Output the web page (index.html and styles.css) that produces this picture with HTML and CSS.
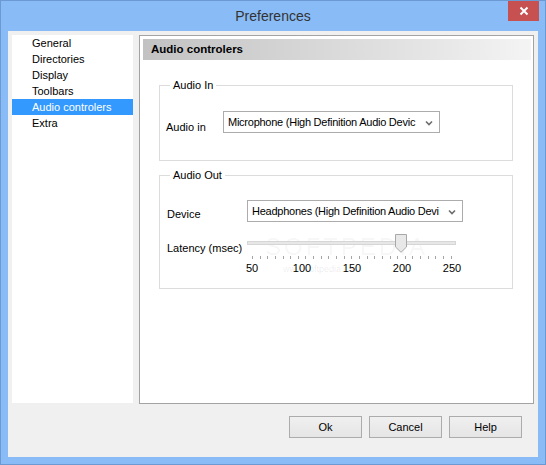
FILE: index.html
```html
<!DOCTYPE html>
<html>
<head>
<meta charset="utf-8">
<link rel="stylesheet" href="styles.css">
</head>
<body>
<div class="window">
  <div class="titlebar">
    <span class="title">Preferences</span>
    <div class="close"><svg width="10" height="10" viewBox="0 0 10 10"><path d="M1.5 1.5L8.5 8.5M8.5 1.5L1.5 8.5" stroke="#fff" stroke-width="2"/></svg></div>
  </div>
  <div class="client">
    <div class="main">
      <ul class="nav">
        <li>General</li>
        <li>Directories</li>
        <li>Display</li>
        <li>Toolbars</li>
        <li class="sel">Audio controlers</li>
        <li>Extra</li>
      </ul>
      <div class="panel">
        <div class="header">Audio controlers</div>
        <div class="content">
          <fieldset class="group g-in">
            <legend>Audio In</legend>
            <div class="row r-in">
              <span class="lbl lbl-in">Audio in</span>
              <div class="combo w-in">
                <span class="ctext">Microphone (High Definition Audio Devic</span>
                <svg class="arrow" width="8" height="6" viewBox="0 0 8 6"><path d="M1 1.5L4 4.5L7 1.5" fill="none" stroke="#6d6d6d" stroke-width="1.6"/></svg>
              </div>
            </div>
          </fieldset>
          <fieldset class="group g-out">
            <legend>Audio Out</legend>
            <div class="row r-dev">
              <span class="lbl lbl-dev">Device</span>
              <div class="combo w-out">
                <span class="ctext">Headphones (High Definition Audio Devi</span>
                <svg class="arrow" width="8" height="6" viewBox="0 0 8 6"><path d="M1 1.5L4 4.5L7 1.5" fill="none" stroke="#6d6d6d" stroke-width="1.6"/></svg>
              </div>
            </div>
            <div class="row r-lat">
              <span class="lbl lbl-lat">Latency (msec)</span>
              <div class="slider">
                <span class="wm-big">SOFTPEDIA<sup>™</sup></span>
                <div class="track-area">
                  <div class="track"></div>
                  <svg class="thumb" style="left:148px" width="12" height="19" viewBox="0 0 12 19"><path d="M0.5 0.5H11.5V13L6 18.3L0.5 13Z" fill="#e8e8e8" stroke="#a8a8a8"/></svg>
                </div>
                <div class="ticks">
                  <i></i><i></i><i></i><i></i><i></i><i></i><i></i><i></i><i></i>
                  <i></i><i></i><i></i><i></i><i></i><i></i><i></i><i></i><i></i>
                  <i></i><i></i><i></i><i></i><i></i><i></i><i></i><i></i><i></i>
                </div>
                <div class="scale">
                  <span>50</span><span>100</span><span>150</span><span>200</span><span>250</span>
                </div>
                <span class="wm-small">www.softpedia.com</span>
              </div>
            </div>
          </fieldset>
        </div>
      </div>
    </div>
    <div class="buttons">
      <div class="btn">Ok</div>
      <div class="btn">Cancel</div>
      <div class="btn">Help</div>
    </div>
  </div>
</div>
</body>
</html>
```

FILE: styles.css
```css
* { box-sizing: border-box; }
html, body { margin: 0; padding: 0; }
body {
  width: 546px;
  height: 465px;
  overflow: hidden;
  font-family: "Liberation Sans", Arial, sans-serif;
  font-size: 11px;
  color: #000;
}
.window {
  width: 546px;
  height: 465px;
  border: 1px solid #6c99d2;
  background: #89bcf6;
  display: flex;
  flex-direction: column;
}
.titlebar {
  height: 30px;
  position: relative;
  text-align: center;
  line-height: 30px;
  flex: none;
}
.title {
  font-size: 14px;
  color: #333;
}
.close {
  position: absolute;
  right: 6px;
  top: 0;
  width: 31px;
  height: 20px;
  background: #c75050;
  display: flex;
  align-items: center;
  justify-content: center;
}
.close svg { display: block; }
.client {
  flex: 1;
  margin: 0 7px 7px 7px;
  background: #f0f0f0;
  padding: 4px 4px 0 4px;
}
.main {
  display: flex;
  gap: 6px;
  height: 369px;
}
.nav {
  list-style: none;
  margin: 0;
  padding: 0;
  width: 121px;
  height: 368px;
  background: #fff;
  flex: none;
}
.nav li {
  height: 16px;
  line-height: 16px;
  padding-left: 20px;
}
.nav li.sel {
  background: #3399ff;
  color: #fff;
}
.panel {
  flex: 1;
  border: 1px solid #a3a3a3;
  background: #fff;
}
.header {
  margin: 3px 2px 0 3px;
  height: 21px;
  line-height: 21px;
  padding-left: 8px;
  font-weight: bold;
  font-size: 11.5px;
  background: linear-gradient(to right, #c2c2c2, #e6e6e6 75%, #f4f4f4);
}
.content {
  padding: 0 20px 0 19px;
}
.group {
  margin: 0;
  padding: 0;
  min-width: 0;
  border: 1px solid #dcdcdc;
}
.group legend {
  margin-left: 10px;
  padding: 0 3px;
  line-height: 14px;
  font-size: 11px;
}
.g-in { margin-top: 18px; }
.g-out { margin-top: 7px; padding-bottom: 13px; }
.row { display: flex; align-items: flex-start; }
.lbl {
  flex: none;
  line-height: 14px;
  white-space: nowrap;
}
.r-in { padding: 19px 0 26px 0; }
.lbl-in { width: 63px; padding-left: 6px; margin-top: 9px; }
.r-dev { padding-top: 18px; }
.lbl-dev { width: 87px; padding-left: 7px; margin-top: 7px; }
.lbl-lat { width: 87px; padding-left: 7px; margin-top: 19px; }
.combo {
  height: 22px;
  border: 1px solid #acacac;
  background: #fff;
  display: flex;
  align-items: center;
  padding-left: 4px;
  position: relative;
}
.w-in { width: 217px; }
.w-out { width: 216px; }
.ctext { white-space: nowrap; flex: 1; letter-spacing: -0.25px; }
.arrow { flex: none; margin: 1px 6px 0 2px; display: block; }
.slider {
  width: 209px;
  margin-top: 12px;
  position: relative;
}
.track-area {
  height: 18px;
  position: relative;
}
.track {
  position: relative;
  top: 7px;
  height: 4px;
  border: 1px solid #d6d6d6;
  background: #e7e7e7;
}
.thumb {
  position: absolute;
  top: 0;
  display: block;
}
.ticks {
  margin: 4px 0 0 5px;
  width: 200px;
  height: 3px;
  display: flex;
  justify-content: space-between;
}
.ticks i {
  width: 1px;
  height: 3px;
  background: #a6a6a6;
}
.scale {
  margin: 3px 0 0 -20px;
  display: grid;
  grid-template-columns: repeat(5, 50px);
  line-height: 13px;
  text-align: center;
  position: relative;
}
.wm-big {
  position: absolute;
  left: 18px;
  top: -2px;
  font-size: 24px;
  letter-spacing: 3px;
  color: rgba(0, 0, 0, 0.045);
  white-space: nowrap;
  line-height: 24px;
}
.wm-big sup { font-size: 8px; letter-spacing: 0; }
.wm-small {
  position: absolute;
  left: 36px;
  top: 30px;
  font-size: 9px;
  line-height: 10px;
  color: rgba(0, 0, 0, 0.09);
  white-space: nowrap;
}
.buttons {
  margin: 12px 12px 0 0;
  display: flex;
  justify-content: flex-end;
  gap: 7px;
}
.btn {
  width: 73px;
  height: 22px;
  border: 1px solid #acacac;
  background: linear-gradient(#f0f0f0, #e5e5e5);
  display: flex;
  align-items: center;
  justify-content: center;
}
```
